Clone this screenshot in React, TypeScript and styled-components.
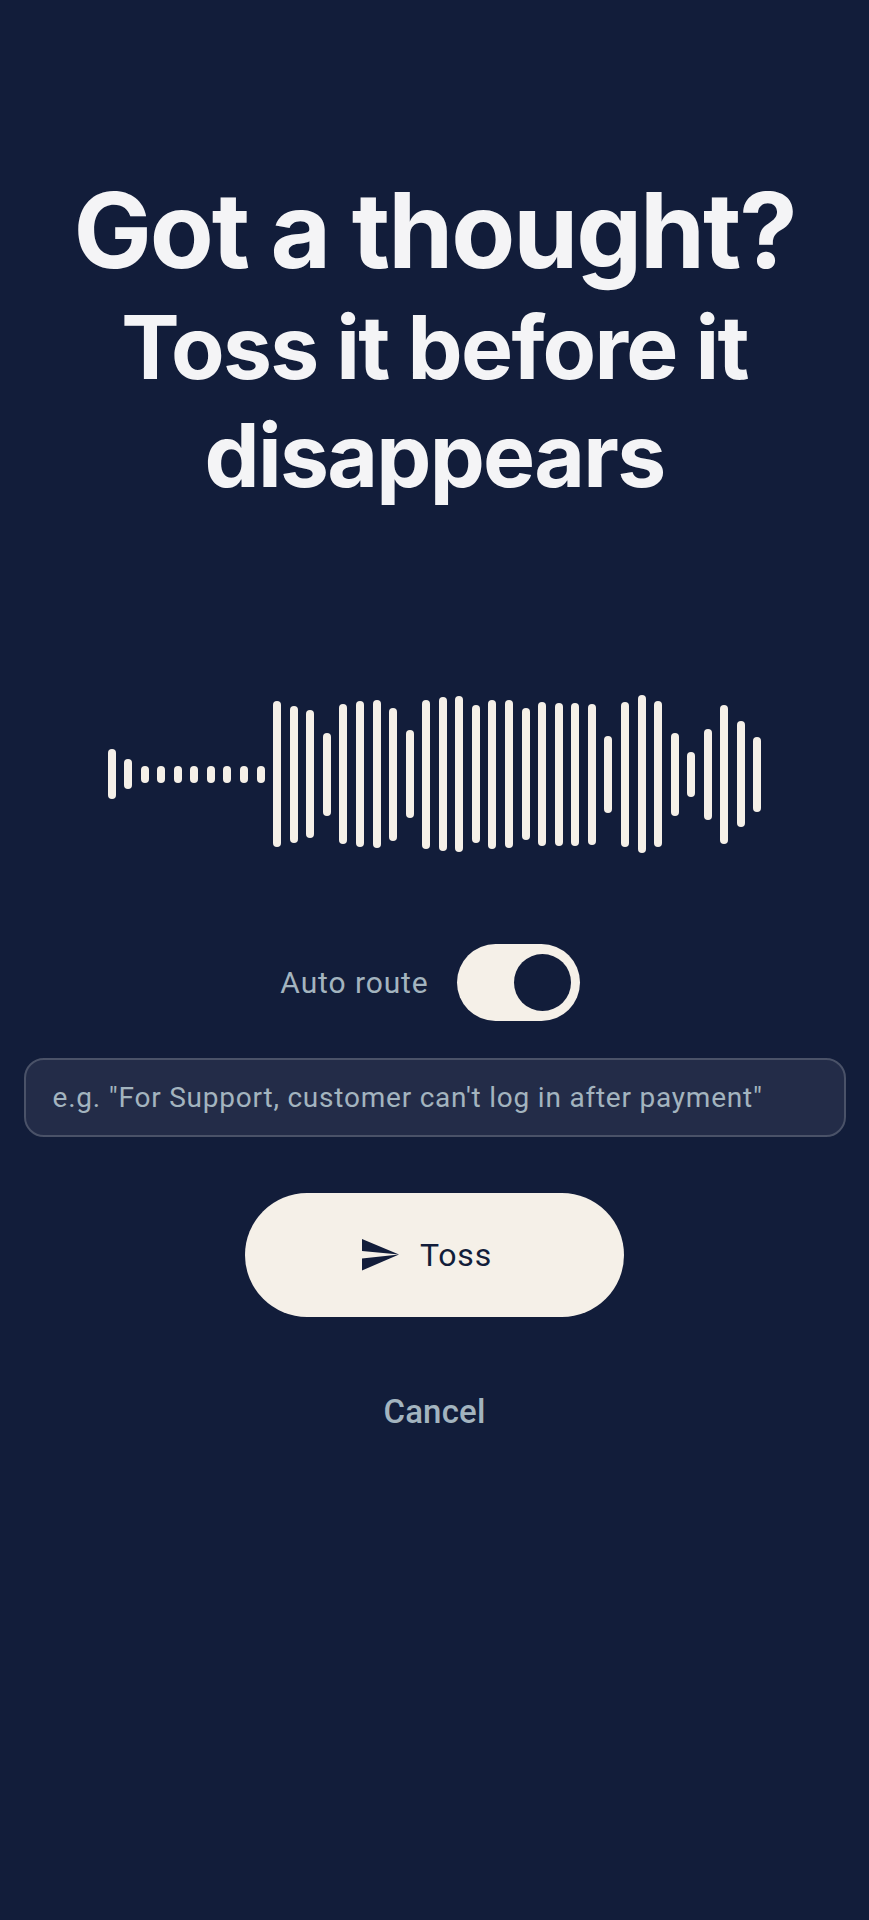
import React from "react";
import styled, { createGlobalStyle } from "styled-components";

const Global = createGlobalStyle`
  html, body { margin: 0; padding: 0; background: #121d3a; }
  * { box-sizing: border-box; }
`;

const Page = styled.main`
  width: 869px;
  height: 1920px;
  background: #121d3a;
  display: flex;
  flex-direction: column;
  align-items: center;
  overflow: hidden;
`;

const Heading = styled.h1`
  margin: 167px 0 0;
  width: 100%;
  text-align: center;
  font-family: Inter, sans-serif;
  font-weight: 700;
  color: #f4f4f6;
`;

const HeadLine = styled.span`
  display: block;
  font-size: 104.5px;
  letter-spacing: -0.02em;
  line-height: 127px;
`;

const SubLine = styled.span`
  display: block;
  font-size: 87.5px;
  letter-spacing: -0.02em;
  line-height: 107.5px;
`;

const Wave = styled.div`
  margin-top: 185px;
  height: 160px;
  display: flex;
  align-items: center;
  gap: 8.57px;
`;

const Bar = styled.div<{ $h: number }>`
  width: 8px;
  height: ${(p) => p.$h}px;
  background: #f5f0e8;
  border-radius: 4px;
`;

const AutoRow = styled.div`
  margin: 90px 9px 0 0;
  display: flex;
  align-items: center;
  gap: 28px;
`;

const AutoLabel = styled.span`
  font-family: Roboto, sans-serif;
  font-size: 30px;
  letter-spacing: 0.9px;
  color: #a3b4bf;
`;

const Toggle = styled.div`
  width: 123px;
  height: 77px;
  border-radius: 39px;
  background: #f5f0e8;
  display: flex;
  align-items: center;
  justify-content: flex-end;
  padding-right: 9px;
`;

const Knob = styled.div`
  width: 57px;
  height: 57px;
  border-radius: 50%;
  background: #121d3a;
`;

const Field = styled.div`
  margin-top: 37px;
  width: 822px;
  height: 79px;
  border: 2.5px solid #4a5268;
  border-radius: 20px;
  background: #232c48;
  display: flex;
  align-items: center;
  padding-left: 27px;
  font-family: Roboto, sans-serif;
  font-size: 28px;
  letter-spacing: 0.78px;
  color: #a3b4bf;
  white-space: nowrap;
`;

const TossButton = styled.button`
  margin-top: 56px;
  width: 379px;
  height: 124px;
  border: 0;
  border-radius: 62px;
  background: #f5f0e8;
  display: flex;
  align-items: center;
  justify-content: center;
  gap: 21px;
  padding: 0 15px 0 0;
  font-family: Roboto, sans-serif;
  font-weight: 400;
  font-size: 32px;
  letter-spacing: 0.85px;
  color: #121d3a;
`;

const Cancel = styled.button`
  margin-top: 75px;
  border: 0;
  background: none;
  padding: 0;
  font-family: Roboto, sans-serif;
  font-weight: 500;
  font-size: 33px;
  letter-spacing: 0.2px;
  line-height: 40px;
  color: #a3b4bf;
`;

const heights = [50, 30, 17, 17, 17, 17, 17, 17, 17, 17, 146, 137, 128, 83, 140, 146, 148, 133, 88, 149, 154, 156, 138, 149, 148, 132, 144, 143, 143, 141, 77, 145, 158, 146, 83, 45, 91, 139, 106, 75];

export default function App() {
  return (
    <Page>
      <Global />
      <Heading>
        <HeadLine>Got a thought?</HeadLine>
        <SubLine>Toss it before it</SubLine>
        <SubLine>disappears</SubLine>
      </Heading>
      <Wave>
        {heights.map((h, i) => (
          <Bar key={i} $h={h} />
        ))}
      </Wave>
      <AutoRow>
        <AutoLabel>Auto route</AutoLabel>
        <Toggle>
          <Knob />
        </Toggle>
      </AutoRow>
      <Field>e.g. "For Support, customer can't log in after payment"</Field>
      <TossButton>
        <svg width="37" height="32" viewBox="0 0 37 32">
          <path d="M0 0L37 15.5L0 12ZM0 31.5L37 15.5L0 19.5Z" fill="#121d3a" />
        </svg>
        Toss
      </TossButton>
      <Cancel>Cancel</Cancel>
    </Page>
  );
}
